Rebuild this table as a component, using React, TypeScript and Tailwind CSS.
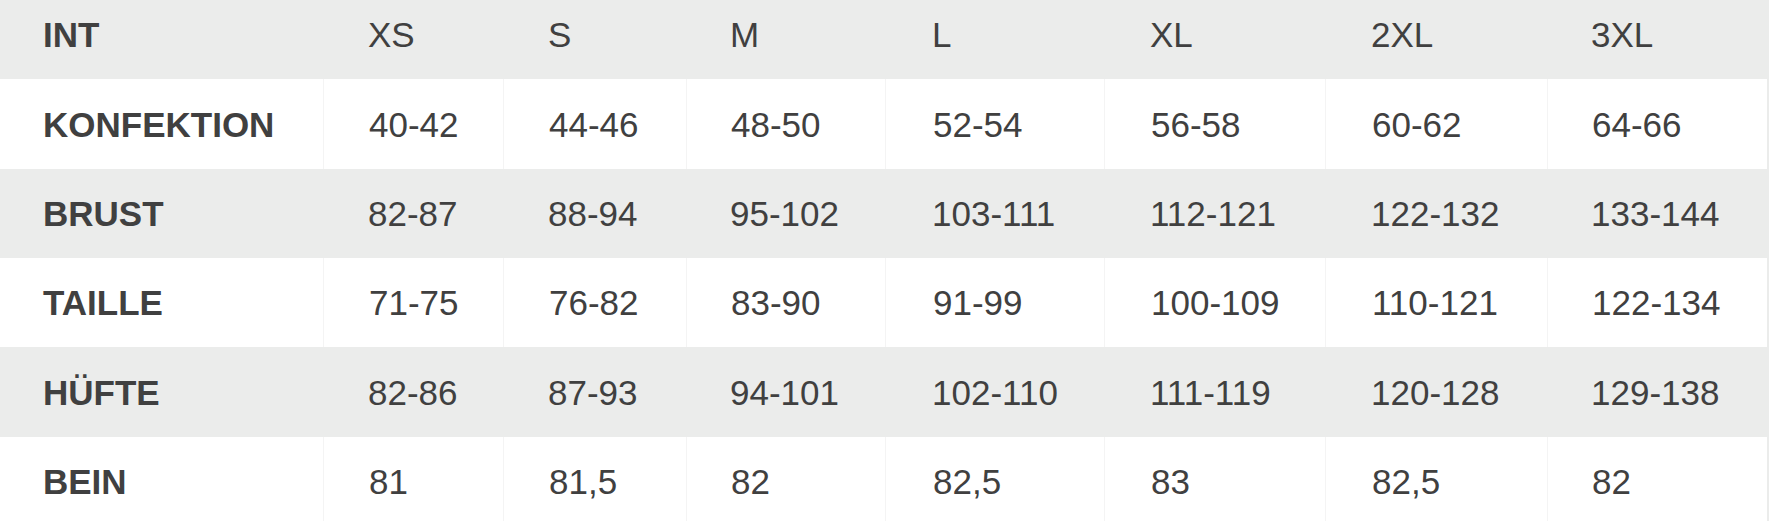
import React from "react";

const header = ["INT", "XS", "S", "M", "L", "XL", "2XL", "3XL"];
const rows: string[][] = [
  ["KONFEKTION", "40-42", "44-46", "48-50", "52-54", "56-58", "60-62", "64-66"],
  ["BRUST", "82-87", "88-94", "95-102", "103-111", "112-121", "122-132", "133-144"],
  ["TAILLE", "71-75", "76-82", "83-90", "91-99", "100-109", "110-121", "122-134"],
  ["HÜFTE", "82-86", "87-93", "94-101", "102-110", "111-119", "120-128", "129-138"],
  ["BEIN", "81", "81,5", "82", "82,5", "83", "82,5", "82"],
];

const pads = ["pl-[43px]", "pl-[45px]", "pl-[45px]", "pl-[44px]", "pl-[47px]", "pl-[46px]", "pl-[46px]", "pl-[44px]"];

export default function App() {
  return (
    <div className="w-[1769px] h-[521px] overflow-hidden bg-[#ebeceb] text-[#404040] text-[35px] leading-none font-['Liberation_Sans',Arial,sans-serif]">
      <div className="w-[1767px] grid grid-cols-[323px_180px_183px_199px_219px_221px_222px_220px]">
        {header.map((h, i) => (
          <div
            key={h}
            className={`h-[79px] flex items-center pb-[11px] bg-[#ebeceb] ${pads[i]} ${i === 0 ? "font-bold" : ""}`}
          >
            {h}
          </div>
        ))}
        {rows.map((r, ri) => {
          const white = ri % 2 === 0;
          return r.map((c, ci) => (
            <div
              key={`${ri}-${ci}`}
              className={`${ri === 4 ? "h-[90px] pb-[2px]" : ri === 1 || ri === 2 ? "h-[89px]" : "h-[90px]"} flex items-center ${pads[ci]} ${
                white ? "bg-white" : "bg-[#ebeceb]"
              } ${ci > 0 && white ? "border-l border-[#f4f4f4]" : ""} ${ci === 0 ? "font-bold" : ""}`}
            >
              {c}
            </div>
          ));
        })}
      </div>
    </div>
  );
}
